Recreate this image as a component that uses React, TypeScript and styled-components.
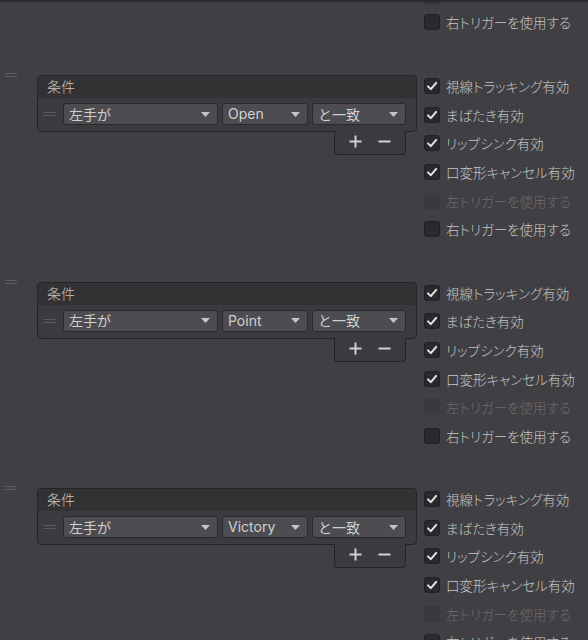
import React from 'react';
import styled, {createGlobalStyle} from 'styled-components';

type Toggle = {label:string, checked:boolean, disabled?:boolean};

const toggles:Toggle[]=[
    {label:'視線トラッキング有効', checked:true},
    {label:'まばたき有効', checked:true},
    {label:'リップシンク有効', checked:true},
    {label:'口変形キャンセル有効', checked:true},
    {label:'左トリガーを使用する', checked:false, disabled:true},
    {label:'右トリガーを使用する', checked:false},
]

const gestures:string[]=['Open','Point','Victory'];

const CheckMark = () => (
    <svg width="12" height="12" viewBox="0 0 12 12">
        <path d="M2 6.4 L4.8 9.1 L10.2 2.9" fill="none" stroke="#e6e6e6" strokeWidth="2" strokeLinecap="round" strokeLinejoin="round"/>
    </svg>
);

const Arrow = () => (
    <svg width="9" height="5" viewBox="0 0 9 5">
        <path d="M0 0 L9 0 L4.5 5 Z" fill="#c4c4c4"/>
    </svg>
);

const PlusIcon = () => (
    <svg width="13" height="13" viewBox="0 0 13 13">
        <path d="M6.5 0.5 V12.5 M0.5 6.5 H12.5" stroke="#d0d0d0" strokeWidth="2"/>
    </svg>
);

const MinusIcon = () => (
    <svg width="13" height="13" viewBox="0 0 13 13">
        <path d="M0.5 6.5 H12.5" stroke="#d0d0d0" strokeWidth="2"/>
    </svg>
);

const ToggleRow = ({t}:{t:Toggle}) => (
    <CheckRow disabled={t.disabled}>
        <Box disabled={t.disabled}>{t.checked && <CheckMark/>}</Box>
        <span>{t.label}</span>
    </CheckRow>
);

const App = () => {
    const last = toggles[toggles.length-1];
    return (
        <Page>
            <GlobalStyle/>
            {/* tail of the previous element, scrolled mostly out of view */}
            <Tail>
                <EdgeBox/>
                <ToggleRow t={last}/>
            </Tail>
            {gestures.map((g, i)=>(
                <Item key={i}>
                    <Handle/>
                    <CondColumn>
                        <CondBox>
                            <CondHeader>条件</CondHeader>
                            <CondRow>
                                <RowHandle/>
                                <Dropdown width={155}><span>左手が</span><Arrow/></Dropdown>
                                <Dropdown width={86}><span>{g}</span><Arrow/></Dropdown>
                                <Dropdown width={94}><span>と一致</span><Arrow/></Dropdown>
                            </CondRow>
                        </CondBox>
                        <Footer>
                            <PlusIcon/>
                            <MinusIcon/>
                        </Footer>
                    </CondColumn>
                    <Checks>
                        {toggles.map(t=>(
                            <ToggleRow key={t.label} t={t}/>
                        ))}
                    </Checks>
                </Item>
            ))}
        </Page>
    );
};

export default App;



const GlobalStyle=createGlobalStyle`
body{
    margin: 0;
    background: #403f43;
    font-family: Inter, "Noto Sans CJK JP", sans-serif;
    overflow: hidden;
}
`

const Page=styled.div`
display: flex;
flex-direction: column;
height: 640px;
overflow: hidden;
border-top: 2px solid #2b2a2e;
box-sizing: border-box;
`

const Tail=styled.div`
display: flex;
flex-direction: column;
height: 71px;
flex-shrink: 0;
box-sizing: border-box;
padding: 0 0 0 424px;
`

const EdgeBox=styled.div`
width: 16px;
height: 2px;
margin-bottom: 4px;
background: #333236;
border-radius: 0 0 3px 3px;
`

const Item=styled.div`
display: flex;
height: 206.5px;
flex-shrink: 0;
`

const Handle=styled.div`
width: 12px;
height: 2px;
margin: 0 20px 0 5px;
border-top: 1px solid #5e5d61;
border-bottom: 1px solid #5e5d61;
`

const CondColumn=styled.div`
display: flex;
flex-direction: column;
align-items: flex-end;
width: 380px;
margin-top: 2px;
`

const CondBox=styled.div`
width: 380px;
box-sizing: border-box;
border: 1px solid #242326;
border-radius: 4px;
background: #3b3a3e;
overflow: hidden;
`

const CondHeader=styled.div`
height: 22px;
line-height: 21px;
padding-left: 9px;
background: #323134;
color: #c4c4c4;
font-size: 14px;
font-weight: 300;
`

const CondRow=styled.div`
display: flex;
align-items: center;
gap: 4px;
padding: 5px 0 6px 5px;
`

const RowHandle=styled.div`
width: 13px;
height: 2px;
margin-right: 3px;
border-top: 1px solid #5a595d;
border-bottom: 1px solid #5a595d;
`

const Dropdown=styled.div<{width:number}>`
display: flex;
align-items: center;
justify-content: space-between;
width: ${p=>p.width}px;
height: 22px;
box-sizing: border-box;
padding: 0 7px 1px 5px;
background: #4d4c50;
border: 1px solid #2a292c;
border-radius: 3px;
color: #d0d0d0;
font-size: 14px;

svg{
    margin-top: 1px;
}
`

const Footer=styled.div`
display: flex;
align-items: center;
justify-content: space-around;
width: 72px;
height: 24px;
margin-right: 11px;
margin-top: -1px;
box-sizing: border-box;
padding: 0 6px 2px 6px;
background: #3b3a3e;
border: 1px solid #242326;
border-top: none;
border-radius: 0 0 4px 4px;
`

const Checks=styled.div`
display: flex;
flex-direction: column;
margin-left: 7px;
margin-top: -1px;
`

const CheckRow=styled.div<{disabled?:boolean}>`
display: flex;
align-items: center;
height: 28.6px;
flex-shrink: 0;
gap: 6px;
font-size: 13.5px;
font-weight: 300;
font-feature-settings: "palt";
color: ${p=>p.disabled ? '#6c6b6f' : '#c6c6c6'};
white-space: nowrap;
`

const Box=styled.div<{disabled?:boolean}>`
display: flex;
align-items: center;
justify-content: center;
width: 16px;
height: 16px;
flex-shrink: 0;
box-sizing: border-box;
border-radius: 3px;
background: ${p=>p.disabled ? '#3a393d' : '#2a292c'};
border: 1px solid ${p=>p.disabled ? '#38373b' : '#212023'};
`
